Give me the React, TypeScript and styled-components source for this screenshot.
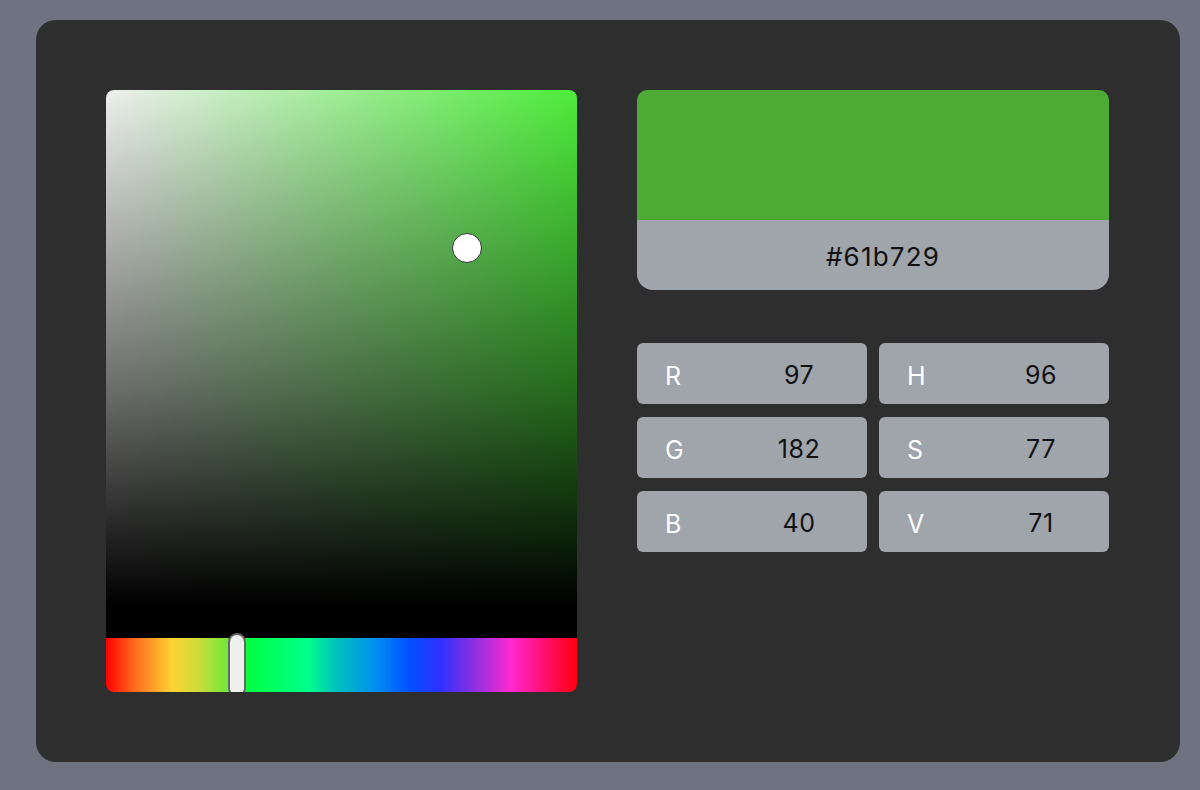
import { FC } from "react";
import styled, { createGlobalStyle } from "styled-components";

const GlobalStyle = createGlobalStyle`
  html, body {
    margin: 0;
    padding: 0;
    background: #6f7280;
    font-family: Inter, "Noto Sans", "Liberation Sans", sans-serif;
  }
`;

const Page = styled.div`
  width: 1200px;
  height: 790px;
  padding: 20px 20px 28px 36px;
  box-sizing: border-box;
`;

const Card = styled.div`
  width: 1144px;
  height: 742px;
  background: #2e2e2e;
  border-radius: 20px;
  padding: 70px 70px 0 70px;
  box-sizing: border-box;
  display: flex;
  gap: 60px;
  align-items: flex-start;
`;

const Picker = styled.div`
  width: 471px;
  display: flex;
  flex-direction: column;
  border-radius: 8px;
  overflow: hidden;
`;

const Saturation = styled.div<{ $hue: string }>`
  position: relative;
  height: 548px;
  background:
    linear-gradient(to top, #000 0%, #000 6%, rgba(0, 0, 0, 0.55) 45%, rgba(0, 0, 0, 0) 100%),
    linear-gradient(to right, #eeeeee 0%, ${(p) => p.$hue} 100%);
`;

const Handle = styled.div`
  position: absolute;
  width: 28px;
  height: 28px;
  margin: -15px 0 0 -15px;
  border-radius: 50%;
  background: #ffffff;
  border: 1.5px solid #333333;
`;

const HueBar = styled.div`
  position: relative;
  height: 54px;
  background: linear-gradient(
    to right,
    #ff0000 0%,
    #ff6a1e 6%,
    #ffd233 14%,
    #c8dc3a 20%,
    #6ee83a 26%,
    #00ff44 30.5%,
    #00ff8c 43%,
    #00c0bc 49%,
    #0090ee 57%,
    #0050ff 64.5%,
    #3030ff 71%,
    #8a30e0 78%,
    #ff28d0 86%,
    #ff1070 93%,
    #ff0010 100%
  );
`;

const HueThumb = styled.div`
  position: absolute;
  top: -5px;
  width: 14px;
  height: 60px;
  margin-left: -9px;
  border-radius: 9px;
  background: #efefef;
  border: 2px solid #666666;
`;

const Side = styled.div`
  width: 472px;
  display: flex;
  flex-direction: column;
  gap: 53px;
`;

const Preview = styled.div`
  display: flex;
  flex-direction: column;
  border-radius: 10px 10px 16px 16px;
  overflow: hidden;
`;

const Swatch = styled.div<{ $color: string }>`
  height: 130px;
  background: ${(p) => p.$color};
`;

const HexLabel = styled.div`
  height: 70px;
  background: #a0a4ab;
  display: flex;
  align-items: center;
  justify-content: center;
  padding: 2px 0 0 20px;
  box-sizing: border-box;
  font-size: 26px;
  color: #111111;
  letter-spacing: 1.2px;
`;

const Fields = styled.div`
  display: grid;
  grid-template-columns: 230px 230px;
  column-gap: 12px;
  row-gap: 13px;
`;

const Field = styled.div`
  height: 61px;
  background: #a0a4ab;
  border-radius: 6px;
  display: grid;
  grid-template-columns: 92px 1fr;
  align-items: center;
  padding-left: 28px;
  box-sizing: border-box;
  font-size: 25px;
`;

const FieldName = styled.span`
  color: #ffffff;
  padding-top: 4px;
`;

const FieldValue = styled.span`
  color: #111111;
  text-align: center;
  margin-left: -26px;
  padding-top: 2px;
  letter-spacing: 0.5px;
`;

const fields: [string, number][] = [
  ["R", 97],
  ["H", 96],
  ["G", 182],
  ["S", 77],
  ["B", 40],
  ["V", 71],
];

const App: FC = () => {
  const hex = "#61b729";
  return (
    <Page>
      <GlobalStyle />
      <Card>
        <Picker>
          <Saturation $hue="#4eec3b">
            <Handle style={{ left: "76.6%", top: "28.8%" }} />
          </Saturation>
          <HueBar>
            <HueThumb style={{ left: "27.8%" }} />
          </HueBar>
        </Picker>
        <Side>
          <Preview>
            <Swatch $color="#4caa35" />
            <HexLabel>{hex}</HexLabel>
          </Preview>
          <Fields>
            {fields.map(([name, value]) => (
              <Field key={name}>
                <FieldName>{name}</FieldName>
                <FieldValue>{value}</FieldValue>
              </Field>
            ))}
          </Fields>
        </Side>
      </Card>
    </Page>
  );
};

export default App;
